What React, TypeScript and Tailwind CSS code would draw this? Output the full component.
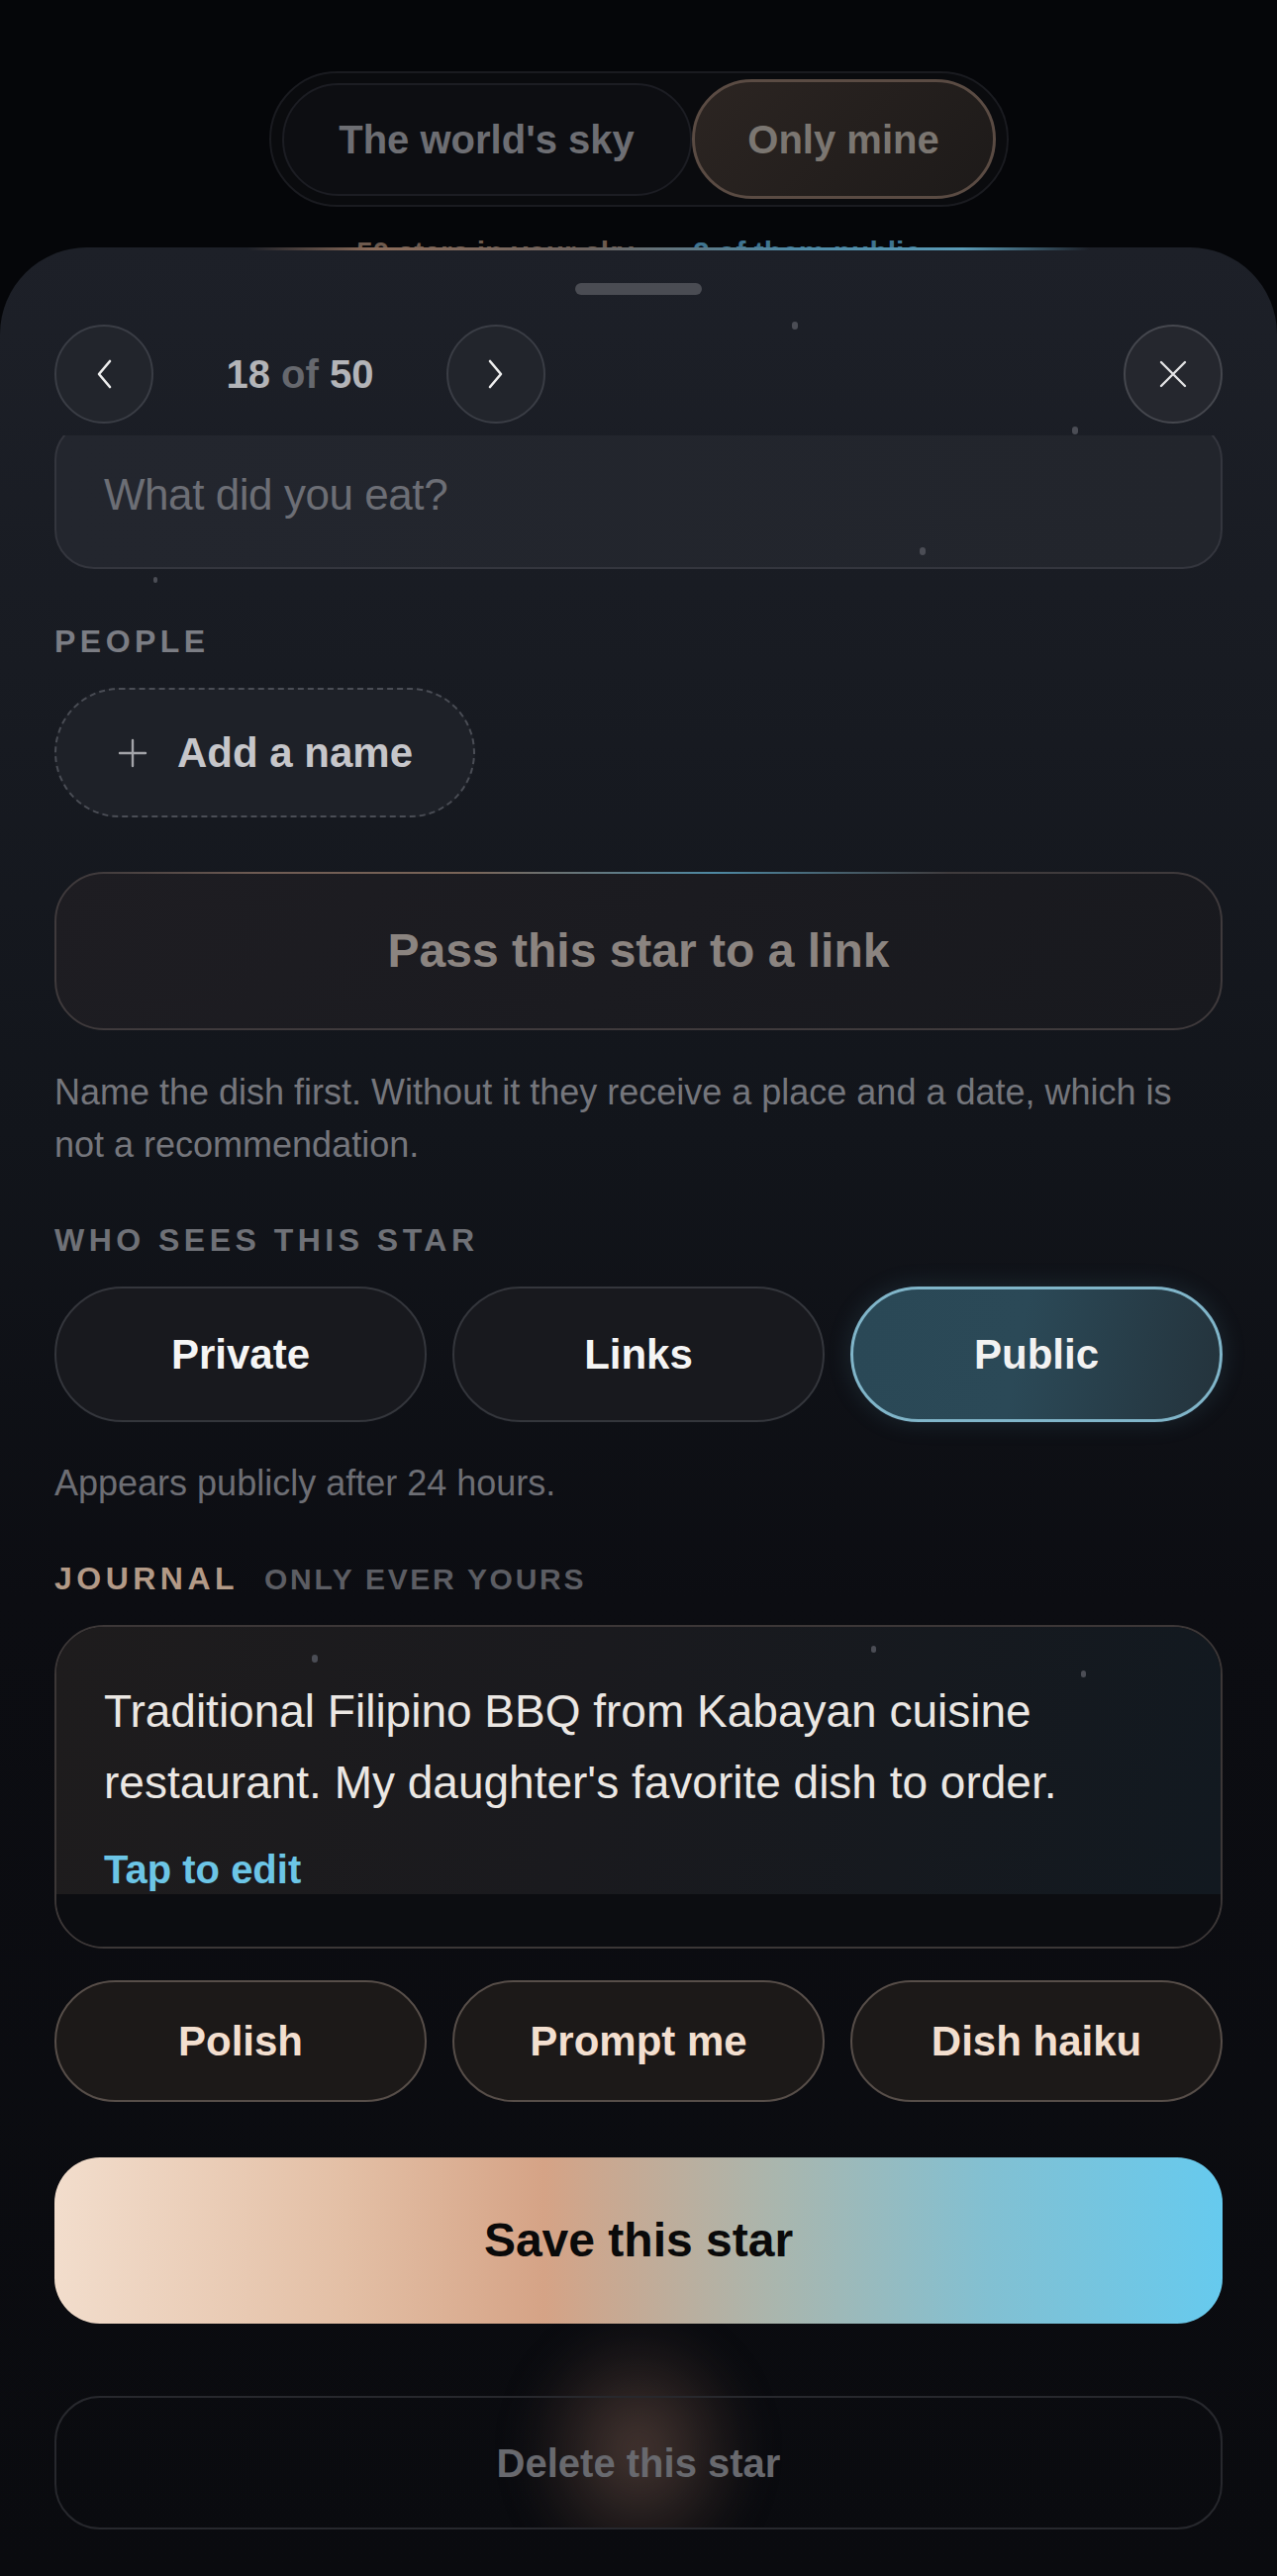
import React from 'react';

const label = "text-[32px] leading-[32px] font-bold tracking-[0.14em] uppercase";

const dots: { x: number; y: number; s: number }[] = [
  { x: 800, y: 325, s: 6 },
  { x: 1083, y: 431, s: 6 },
  { x: 929, y: 553, s: 6 },
  { x: 155, y: 583, s: 4 },
  { x: 315, y: 1672, s: 6 },
  { x: 880, y: 1663, s: 5 },
  { x: 1092, y: 1688, s: 5 },
];

function Circle({ children, light }: { children: React.ReactNode; light?: boolean }) {
  return (
    <button
      className={`flex h-[100px] w-[100px] shrink-0 items-center justify-center rounded-full border-2 ${
        light ? 'border-[#45474e] bg-[#25272e]' : 'border-[#3a3d45] bg-[#22252c]'
      }`}
    >
      {children}
    </button>
  );
}

export default function App() {
  return (
    <div className="relative min-h-screen overflow-hidden bg-[#050609] font-['Liberation_Sans',Arial,sans-serif]">
      {/* sky toggle */}
      <div className="flex justify-center pt-[72px]">
        <div className="flex h-[137px] w-[747px] items-center rounded-full border-2 border-[#1a1b20] bg-[#0a0b0e] px-[11px]">
          <div className="flex h-[114px] w-[414px] items-center justify-center rounded-full border-2 border-[#1c1d23] bg-[#0d0e12] text-[40px] font-bold text-[#6d6e73]">
            The world's sky
          </div>
          <div className="flex h-[121px] flex-1 items-center justify-center rounded-full border-[3px] border-[#5a4b43] bg-[linear-gradient(135deg,#2c2522,#1d1a19)] text-[40px] font-bold text-[#7b7671]">
            Only mine
          </div>
        </div>
      </div>

      {/* counts, mostly hidden by the sheet */}
      <div className="mt-[31px] flex h-[30px] justify-center gap-[60px] text-[30px] leading-[30px] font-bold">
        <span className="text-[#6e5a4e]">50 stars in your sky</span>
        <span className="text-[#3f7490]">2 of them public</span>
      </div>

      {/* sheet */}
      <div className="relative z-10 -mt-[20px] flow-root min-h-[2353px] rounded-t-[88px] bg-[linear-gradient(180deg,#1d2028_0%,#181b22_18%,#12151b_38%,#0c0d12_58%,#0a0b0f_100%)] pt-[36px] pb-[46px]">
        <div className="absolute left-[250px] right-[190px] top-0 h-[3px] bg-[linear-gradient(90deg,transparent,#8c6c5a_15%,#6e6460_40%,#4f8aa6_65%,#5a9ab5_85%,transparent)]" />
        <div className="mx-auto h-[12px] w-[128px] rounded-full bg-[#4a4c53]" />

        {/* pager */}
        <div className="mt-[30px] flex h-[100px] items-center px-[55px]">
          <Circle>
            <svg width="20" height="32" viewBox="0 0 20 32" fill="none" stroke="#eeeeee" strokeWidth="2.6" strokeLinecap="round" strokeLinejoin="round">
              <path d="M16 3 L5 16 L16 29" />
            </svg>
          </Circle>
          <div className="w-[296px] text-center text-[40px] font-bold leading-none">
            <span className="text-[#b3b4b8]">18</span> <span className="text-[#66686e]">of</span>{' '}
            <span className="text-[#b3b4b8]">50</span>
          </div>
          <Circle>
            <svg width="20" height="32" viewBox="0 0 20 32" fill="none" stroke="#eeeeee" strokeWidth="2.6" strokeLinecap="round" strokeLinejoin="round">
              <path d="M4 3 L15 16 L4 29" />
            </svg>
          </Circle>
          <div className="ml-auto">
            <Circle light>
              <svg width="28" height="28" viewBox="0 0 28 28" fill="none" stroke="#e2e2e4" strokeWidth="2.4" strokeLinecap="round">
                <path d="M2 2 L26 26 M26 2 L2 26" />
              </svg>
            </Circle>
          </div>
        </div>

        {/* scrolling body */}
        <div className="mt-[12px] overflow-hidden px-[55px]">
          <div className="-mt-[15px] flex h-[150px] items-center rounded-[40px] border-2 border-[#34363e] bg-[linear-gradient(90deg,#23262e,#22252c)] pl-[48px] text-[44px] leading-none tracking-[-0.01em] text-[#6c6e75]">
            What did you eat?
          </div>

          <div className={`mt-[57px] ${label} text-[#7b7d84]`}>People</div>
          <button className="mt-[31px] flex h-[131px] w-[425px] items-center gap-[30px] rounded-full border-2 border-dashed border-[#4a4d55] bg-[#1e2128] pl-[62px] text-[42px] font-bold text-[#c6c6ca]">
            <svg width="30" height="30" viewBox="0 0 30 30" fill="none" stroke="#a3a4a9" strokeWidth="2.4" strokeLinecap="round">
              <path d="M15 2 V28 M2 15 H28" />
            </svg>
            Add a name
          </button>

          <div className="relative mt-[55px]">
            <button className="flex h-[160px] w-full items-center justify-center rounded-[50px] border-2 border-[#3f3a3c] bg-[linear-gradient(135deg,#1e1d22,#18191e)] text-[48px] font-bold text-[#8b8480]">
              Pass this star to a link
            </button>
            <div className="absolute left-[40px] right-[60px] top-0 h-[2px] bg-[linear-gradient(90deg,transparent,#6e5b53_15%,#7a6558_35%,#4e89a3_58%,#3f3b3d_80%,transparent)]" />
          </div>
          <p className="mt-[36px] text-[36px] leading-[53px] text-[#75767c]">
            Name the dish first. Without it they receive a place and a date, which is not a recommendation.
          </p>

          <div className={`mt-[54px] ${label} text-[#6f7177]`}>Who sees this star</div>
          <div className="mt-[31px] grid grid-cols-3 gap-[26px]">
            <button className="h-[137px] rounded-full border-2 border-[#34363c] bg-[#18191e] text-[42px] font-bold text-[#f5f5f5]">Private</button>
            <button className="h-[137px] rounded-full border-2 border-[#34363c] bg-[#18191e] text-[42px] font-bold text-[#f5f5f5]">Links</button>
            <button className="h-[137px] rounded-full border-[3px] border-[#80b5c9] bg-[linear-gradient(100deg,#2a4856,#2b4957_45%,#24333c)] text-[42px] font-bold text-[#f2f2f2] shadow-[0_0_24px_rgba(90,150,180,0.18)]">
              Public
            </button>
          </div>
          <p className="mt-[35px] text-[36px] leading-[53px] text-[#6d6e74]">Appears publicly after 24 hours.</p>

          <div className="mt-[54px] flex items-baseline gap-[26px]">
            <span className={`${label} text-[#b39a87]`}>Journal</span>
            <span className="text-[30px] leading-[32px] font-bold tracking-[0.09em] text-[#5c5d63] uppercase">Only ever yours</span>
          </div>
          <div className="mt-[30px] overflow-hidden rounded-[50px] border-2 border-[#3c3737]">
            <div className="h-[270px] overflow-hidden bg-[linear-gradient(100deg,#1e1c1d_0%,#1a1a1e_45%,#121920_100%)] px-[48px] pt-[49px]">
              <p className="text-[46px] leading-[72px] text-[#ebe7e3]">
                Traditional Filipino BBQ from Kabayan cuisine restaurant. My daughter's favorite dish to order.
              </p>
              <p className="mt-[28px] text-[40px] leading-[48px] font-bold text-[#6cc5e6]">Tap to edit</p>
            </div>
            <div className="h-[53px] bg-[#0c0d11]" />
          </div>

          <div className="mt-[32px] grid grid-cols-3 gap-[26px]">
            {['Polish', 'Prompt me', 'Dish haiku'].map((t) => (
              <button key={t} className="h-[123px] rounded-full border-2 border-[#574e49] bg-[#1c1918] text-[42px] font-bold text-[#f3dfcf]">
                {t}
              </button>
            ))}
          </div>

          <div className="relative">
            <div className="absolute left-1/2 top-[170px] h-[250px] w-[230px] -translate-x-1/2 rounded-full bg-[radial-gradient(ellipse_at_center,rgba(120,90,78,0.55),rgba(70,52,46,0.22)_55%,transparent_78%)] blur-[16px]" />
            <button className="relative mt-[56px] flex h-[168px] w-full items-center justify-center rounded-[46px] bg-[linear-gradient(90deg,#f2ddcc_0%,#e3bfa5_25%,#d5a386_42%,#a9b6ae_62%,#82c0d2_80%,#66caee_100%)] text-[48px] font-bold text-[#0a0a0a]">
              Save this star
            </button>
            <button className="relative mt-[73px] flex h-[135px] w-full items-center justify-center rounded-[46px] border-2 border-[#27282d] text-[40px] font-bold text-[#68696e]">
              Delete this star
            </button>
          </div>
        </div>
      </div>

      {/* faint stars */}
      <div className="pointer-events-none absolute inset-0 z-20">
        {dots.map((d, i) => (
          <span
            key={i}
            className="absolute rounded-full bg-[#4b4d55]"
            style={{ left: d.x, top: d.y, width: d.s, height: d.s + 2 }}
          />
        ))}
      </div>
    </div>
  );
}
